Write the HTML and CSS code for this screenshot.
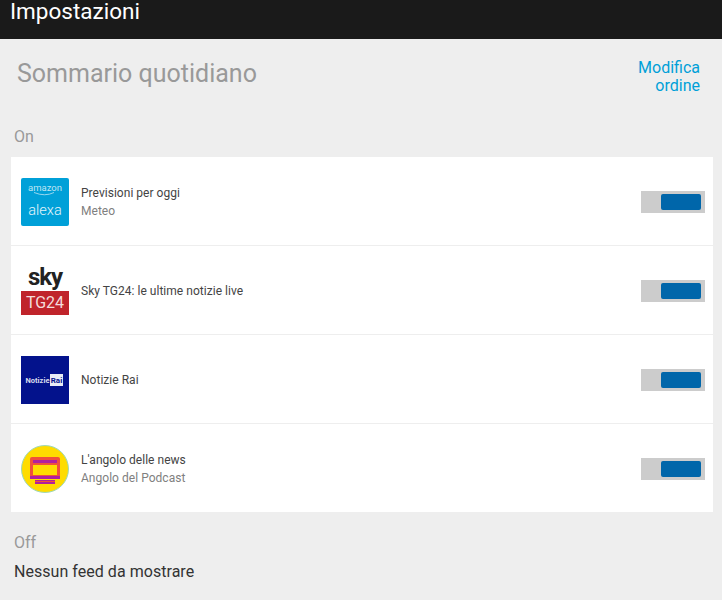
FILE: index.html
```html
<!doctype html>
<html lang="it">
<head>
    <meta charset="utf-8">
    <title>Impostazioni</title>
    <link rel="stylesheet" href="styles.css">
</head>
<body>
    <header class="topbar">Impostazioni</header>

    <div class="heading">
        <h1>Sommario quotidiano</h1>
        <a class="reorder">Modifica<br>ordine</a>
    </div>

    <p class="group">On</p>
    <ul class="feeds">
        <li class="feed">
            <svg class="logo" viewBox="0 0 48 48">
                <rect width="48" height="48" rx="2" fill="#00a0d8"/>
                <text x="24" y="12.5" class="logo-amazon">amazon</text>
                <path d="M13 14.5 Q24 19 33 14.5" fill="none" stroke="#bfe5f4" stroke-width="0.8"/>
                <text x="24" y="37" class="logo-alexa">alexa</text>
            </svg>
            <div class="feed-text">
                <div class="feed-title">Previsioni per oggi</div>
                <div class="feed-sub">Meteo</div>
            </div>
            <span class="toggle"><span class="knob"></span></span>
        </li>
        <li class="feed">
            <svg class="logo" viewBox="0 0 48 48">
                <rect width="48" height="48" fill="#fff"/>
                <rect y="24" width="48" height="24" fill="#c0242b"/>
                <text x="24" y="18" class="logo-sky">sky</text>
                <text x="24" y="41" class="logo-tg">TG24</text>
            </svg>
            <div class="feed-text">
                <div class="feed-title">Sky TG24: le ultime notizie live</div>
            </div>
            <span class="toggle"><span class="knob"></span></span>
        </li>
        <li class="feed">
            <svg class="logo" viewBox="0 0 48 48">
                <rect width="48" height="48" fill="#03128c"/>
                <rect x="29" y="18" width="13" height="12" fill="#e8ecf6"/>
                <text x="16.5" y="26.5" class="logo-notizie">Notizie</text>
                <text x="35.5" y="26.5" class="logo-rai">Rai</text>
            </svg>
            <div class="feed-text">
                <div class="feed-title">Notizie Rai</div>
            </div>
            <span class="toggle"><span class="knob"></span></span>
        </li>
        <li class="feed">
            <svg class="logo" viewBox="0 0 48 48">
                <circle cx="24" cy="24" r="23.5" fill="#ffdc00" stroke="#9fd8b8" stroke-width="1"/>
                <rect x="9" y="12" width="30" height="22" rx="2" fill="#f0503c"/>
                <rect x="12" y="15" width="24" height="3" fill="#b01fa0"/>
                <rect x="12" y="20" width="24" height="10" fill="#ffdc00"/>
                <rect x="9" y="31" width="30" height="3" fill="#b01fa0"/>
                <rect x="14" y="35" width="20" height="4" fill="#b01fa0"/>
                <rect x="14" y="36" width="20" height="1" fill="#f0503c"/>
            </svg>
            <div class="feed-text">
                <div class="feed-title">L'angolo delle news</div>
                <div class="feed-sub">Angolo del Podcast</div>
            </div>
            <span class="toggle"><span class="knob"></span></span>
        </li>
    </ul>

    <p class="group group-off">Off</p>
    <p class="empty">Nessun feed da mostrare</p>
</body>
</html>
```

FILE: styles.css
```css
* {
    padding: 0;
    margin: 0;
    box-sizing: border-box;
}
html, body {
    height: 600px;
    overflow: hidden;
}
body {
    background: #eeeeee;
    font-family: Roboto, "Liberation Sans", sans-serif;
    color: #333333;
}
.topbar {
    height: 39px;
    background: #1a1a1a;
    color: #ffffff;
    font-size: 22.5px;
    line-height: 23px;
    padding-left: 10px;
}
.heading {
    display: flex;
    justify-content: space-between;
    padding: 19px 22px 0 17px;
    height: 81px;
}
.heading h1 {
    font-size: 25px;
    line-height: 32px;
    font-weight: 400;
    color: #999999;
}
.reorder {
    margin-top: 1px;
    font-size: 16px;
    line-height: 18px;
    color: #00a0d8;
    text-align: right;
}
.group {
    font-size: 16px;
    line-height: 20px;
    color: #999999;
    padding-left: 14px;
    height: 37px;
    padding-top: 7px;
}
.feeds {
    list-style: none;
    margin: 0 9px 0 11px;
    background: #ffffff;
}
.feed {
    display: flex;
    align-items: center;
    height: 89px;
    padding: 2px 8px 0 10px;
    border-bottom: 1px solid #eeeeee;
}
.feed:last-child {
    border-bottom: 0;
    height: 88px;
    padding-top: 1px;
}
.logo {
    width: 48px;
    height: 48px;
    flex: none;
    overflow: visible;
}
.logo text {
    text-anchor: middle;
    font-family: Roboto, sans-serif;
}
.logo-amazon {
    font-size: 9.5px;
    fill: #bfe5f4;
}
.logo-alexa {
    font-size: 14.5px;
    font-weight: 300;
    fill: #e4f4fb;
}
.logo-sky {
    font-size: 24px;
    font-weight: 700;
    letter-spacing: -1px;
    fill: #222222;
}
.logo-tg {
    font-size: 16px;
    fill: #f4dcdc;
}
.logo-notizie {
    font-size: 7.5px;
    font-weight: 700;
    fill: #d8dcec;
}
.logo-rai {
    font-size: 8px;
    font-weight: 700;
    fill: #03128c;
}
.feed-text {
    flex: 1;
    margin-left: 12px;
    font-size: 12px;
    letter-spacing: 0.03px;
}
.feed-title {
    line-height: 18px;
    color: #444444;
}
.feed-sub {
    line-height: 18px;
    color: #808080;
}
.toggle {
    display: flex;
    justify-content: flex-end;
    align-items: center;
    width: 64px;
    height: 22px;
    padding-right: 4px;
    background: #cccccc;
}
.knob {
    display: block;
    width: 40px;
    height: 16px;
    border-radius: 2px;
    background: #0066aa;
}
.group-off {
    height: 40px;
    padding-top: 21px;
    line-height: 20px;
}
.empty {
    margin-top: 10px;
    padding-left: 14px;
    font-size: 16px;
    line-height: 20px;
    letter-spacing: 0.04px;
    color: #333333;
}
```
